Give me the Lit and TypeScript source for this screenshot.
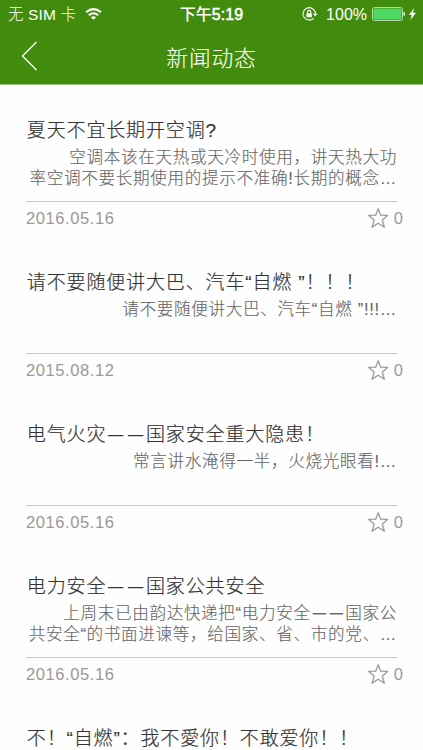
import { LitElement, html, css, nothing } from "lit";
import { customElement } from "lit/decorators.js";

interface News {
  title: string;
  lines: string[];
  date?: string;
  stars?: number;
}

const NEWS: News[] = [
  { title: "夏天不宜长期开空调?", lines: ["空调本该在天热或天冷时使用，讲天热大功", "率空调不要长期使用的提示不准确!长期的概念…"], date: "2016.05.16", stars: 0 },
  { title: "请不要随便讲大巴、汽车“自燃 ”！！！", lines: ["请不要随便讲大巴、汽车“自燃 ”!!!…"], date: "2015.08.12", stars: 0 },
  { title: "电气火灾——国家安全重大隐患！", lines: ["常言讲水淹得一半，火烧光眼看!…"], date: "2016.05.16", stars: 0 },
  { title: "电力安全——国家公共安全", lines: ["上周末已由韵达快递把“电力安全——国家公", "共安全“的书面进谏等，给国家、省、市的党、…"], date: "2016.05.16", stars: 0 },
  { title: "不！“自燃”：我不愛你！不敢爱你！！", lines: [] },
];

// Dashes are set narrower than a full character so that a pair stays visibly separate.
const withDashes = (text: string) =>
  text.split(/(—)/).map((part) => (part === "—" ? html`<span class="dash">—</span>` : part));

@customElement("status-bar")
class StatusBar extends LitElement {
  static styles = css`
    :host { display: grid; grid-template-columns: 1fr auto 1fr; height: 28px; align-items: center; color: #fff; font-size: 16px; line-height: 28px; white-space: nowrap; }
    .left { display: flex; align-items: center; padding-left: 8px; gap: 9px; font-size: 15.5px; font-weight: 300; }
    .sim { letter-spacing: 0.15px; padding-top: 1px; line-height: 27px; }
    .time { font-weight: 500; font-size: 16px; padding-top: 1px; line-height: 27px; }
    .clock { font-weight: 400; -webkit-text-stroke: 0.5px #fff; letter-spacing: 0.1px; }
    .right { display: flex; align-items: center; justify-content: flex-end; padding-right: 7px; }
    .percent { margin: 0 5px 0 8px; padding-top: 1px; line-height: 27px; }
    .bolt { margin-left: 4px; }
    svg { display: block; }
  `;
  render() {
    return html`
      <div class="left">
        <span class="sim">无 SIM 卡</span>
        <svg width="17" height="12" viewBox="0 0 17 12" fill="none" stroke="#fff" stroke-width="2">
          <path d="M1 4.3Q8.5-2.1 16 4.3" />
          <path d="M3.8 7.3Q8.5 3.3 13.2 7.3" />
          <path d="M8.5 11.8L5.9 9.2Q8.5 7.2 11.1 9.2Z" fill="#fff" stroke="none" />
        </svg>
      </div>
      <div class="time">下午<span class="clock">5:19</span></div>
      <div class="right">
        <svg width="16" height="14" viewBox="0 0 16 14" fill="none" stroke="#fff" stroke-width="1.1">
          <path d="M13.2 5.2A6.2 6.2 0 1 0 11.6 11.3M13.3 5V7.8" />
          <path d="M10.7 6.8H15.6L13.2 9.2Z" fill="#fff" stroke="none" />
          <rect x="4.4" y="6.2" width="5.4" height="4.1" fill="#fff" stroke="none" />
          <path d="M5.5 6.4V5A1.6 1.6 0 0 1 8.7 5V6.4" />
        </svg>
        <span class="percent">100%</span>
        <svg width="33" height="14" viewBox="0 0 33 14">
          <rect x=".5" y=".5" width="30" height="13" rx="2" fill="none" stroke="#b9d8a5" />
          <rect x="1.5" y="1.5" width="28" height="11" rx="1" fill="#4cd964" />
          <path d="M31.5 4.8Q33 5.3 33 7T31.5 9.2Z" fill="#fff" />
        </svg>
        <svg class="bolt" width="7" height="12" viewBox="0 0 7 12"><path d="M5.2 0L0 6.9H2.8L1.4 12L7 4.7H3.9Z" fill="#fff" /></svg>
      </div>
    `;
  }
}

@customElement("news-item")
class NewsItem extends LitElement {
  static properties = { news: { attribute: false } };
  declare news: News;
  static styles = css`
    :host { display: flex; flex-direction: column; box-sizing: border-box; height: 152px; padding: 31px 20px 0 26px; font-weight: 300; white-space: nowrap; }
    .title { height: 30px; line-height: 29px; padding-left: 0.8px; font-size: 19px; letter-spacing: 0.86px; color: #333; -webkit-text-stroke: 0.18px #333; }
    .body { height: 56px; box-sizing: border-box; margin-right: 6px; padding-top: 2px; border-bottom: 1px solid #c6c6c6; line-height: 20.5px; font-size: 16.6px; letter-spacing: 0.65px; color: #666; -webkit-text-stroke: 0.12px #666; }
    .line { display: flex; justify-content: flex-end; white-space: pre; }
    .dash { display: inline-block; transform: translateY(-1.5px) scaleX(0.8); }
    .meta { display: flex; align-items: center; justify-content: space-between; height: 32px; font-size: 16.5px; letter-spacing: 0.6px; color: #999; font-weight: 400; }
    .stars { display: flex; align-items: center; gap: 5px; letter-spacing: 0; }
    svg { display: block; }
  `;
  render() {
    const n = this.news;
    return html`
      <div class="title">${withDashes(n.title)}</div>
      <div class="body">${n.lines.map((l) => html`<div class="line"><span>${withDashes(l)}</span></div>`)}</div>
      ${n.date === undefined ? nothing : html`<div class="meta">
        <span>${n.date}</span>
        <span class="stars">
          <svg width="21" height="20" viewBox="0 0 21 20" fill="none" stroke="#999" stroke-width="1.3" stroke-linejoin="round">
            <path d="M10.2 .8L12.6 7.1L19.7 7.4L14.3 11.9L16.3 19.1L10.2 15.2L4.1 19.1L6.1 11.9L.7 7.4L7.8 7.1Z" />
          </svg>
          ${n.stars}
        </span>
      </div>`}
    `;
  }
}

@customElement("app-root")
class AppRoot extends LitElement {
  static styles = css`
    :host { display: block; height: 750px; overflow: hidden; background: #fefefe; font-family: "Liberation Sans", "Noto Sans CJK SC", sans-serif; }
    header { height: 84px; background: #418c0c; border-bottom: 1px solid #9dc485; box-sizing: content-box; }
    .nav { display: grid; grid-template-columns: 1fr auto 1fr; align-items: center; height: 56px; color: #fff; font-size: 21.8px; font-weight: 300; letter-spacing: 0.8px; }
    .title { -webkit-text-stroke: 0.1px #fff; }
    .nav svg { display: block; margin-left: 21px; }
  `;
  render() {
    return html`
      <header>
        <status-bar></status-bar>
        <div class="nav">
          <svg width="17" height="30" viewBox="0 0 17 30" fill="none" stroke="#fff" stroke-width="1.3"><path d="M15.5 1L1.5 15L15.5 29" /></svg>
          <span class="title">新闻动态</span>
        </div>
      </header>
      <main>${NEWS.map((n) => html`<news-item .news=${n}></news-item>`)}</main>
    `;
  }
}
